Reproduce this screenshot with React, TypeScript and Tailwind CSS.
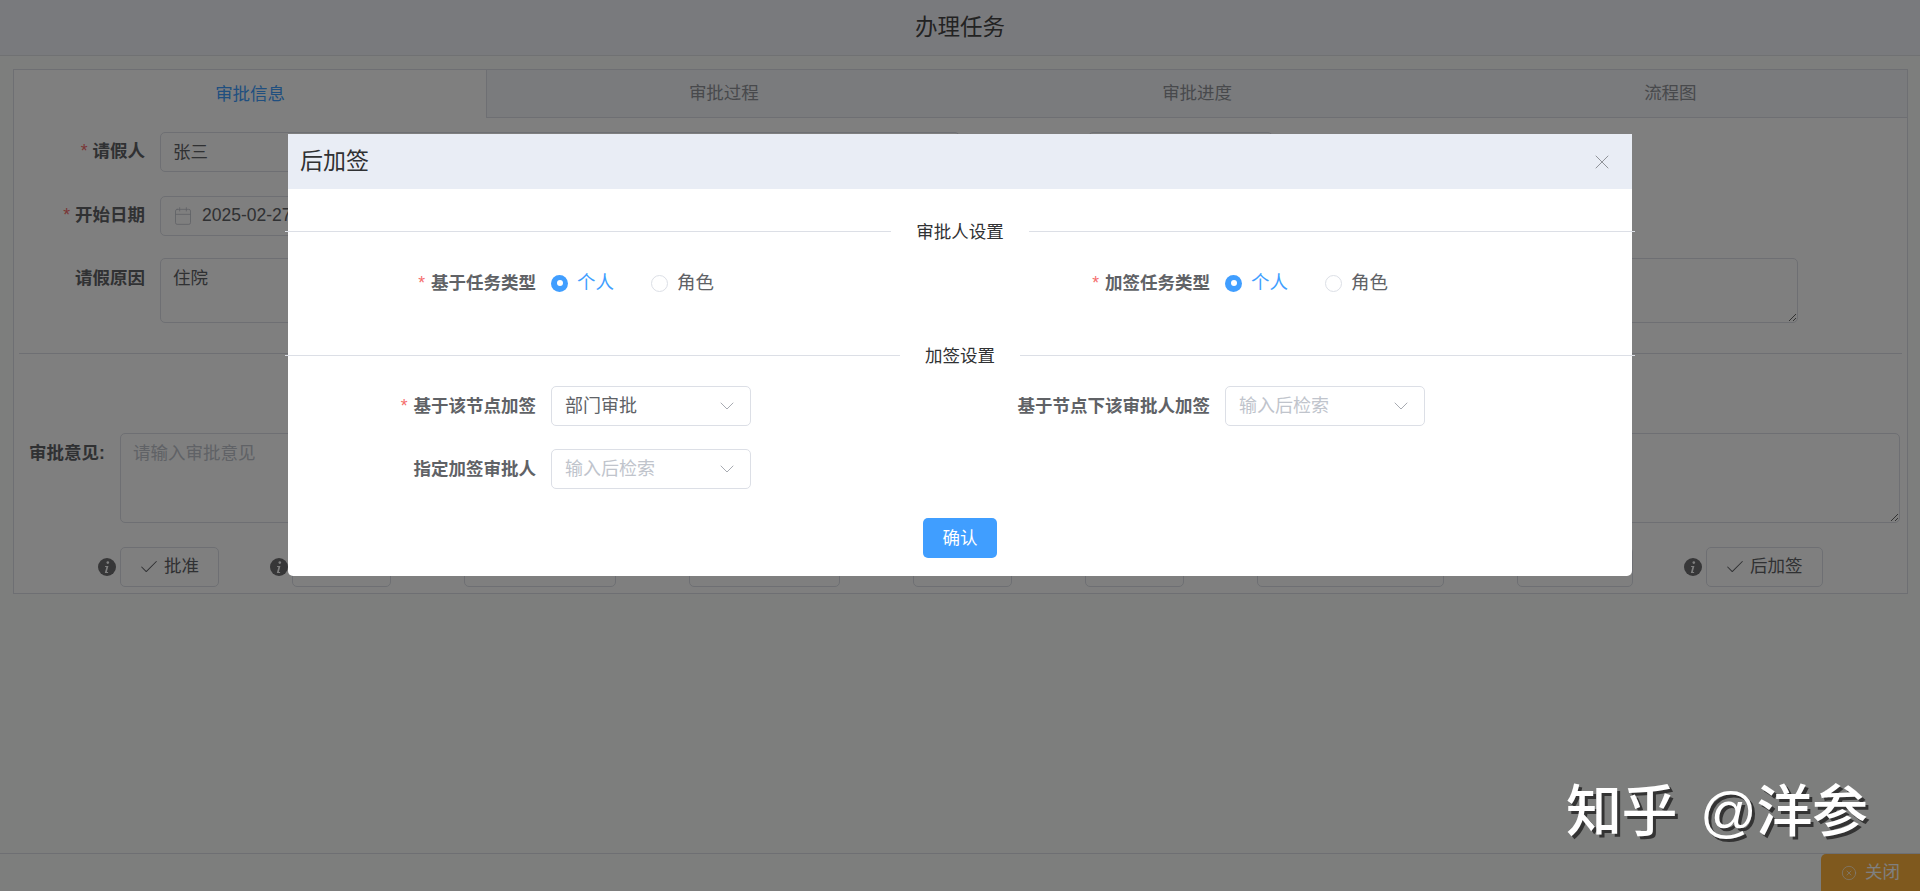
import { Calendar, Check, ChevronDown, CircleX, X } from "lucide-react";

const FONT = "font-['Liberation_Sans','Noto_Sans_CJK_SC',sans-serif]";

function Info() {
  return (
    <svg viewBox="0 0 18 18" className="w-[18px] h-[18px] shrink-0">
      <circle cx="9" cy="9" r="9" fill="#6e6e70" />
      <circle cx="9.8" cy="4.6" r="1.3" fill="#fff" />
      <path d="M7.2 8h3.2l-1.6 6h1.3v1H6.8l1.6-6H7z" fill="#fff" />
    </svg>
  );
}

function ActionButton({ text }: { text: string }) {
  return (
    <div className="flex items-center gap-[4px]">
      <Info />
      <button className="h-10 pl-[17px] pr-[19px] pb-[1px] flex items-center gap-[4px] bg-white border border-[#dcdfe6] rounded-[5px] text-[#606266] text-[17.5px] whitespace-nowrap">
        <Check size={22} strokeWidth={1.1} />
        {text}
      </button>
    </div>
  );
}

function BgLabel({ text, star }: { text: string; star?: boolean }) {
  return (
    <div className="w-[131px] shrink-0 mr-[15px] pb-[2px] flex justify-end items-center gap-[5px] h-10 text-[17.5px] font-bold text-[#606266]">
      {star && <span className="text-[#f56c6c] font-normal">*</span>}
      {text}
    </div>
  );
}

function Background() {
  const tabs = ["审批信息", "审批过程", "审批进度", "流程图"];
  const actions = ["批准", "拒绝", "退回到上级", "退回发起人", "转办", "委派", "驳回到指定节点", "前加签", "后加签"];
  return (
    <div className="h-full flex flex-col bg-[#fbfdfb]">
      <header className="h-[56px] shrink-0 flex items-center justify-center bg-[#f3f4fb] border-b border-[#e0e2e6] text-[22.5px] text-[#454545]">
        办理任务
      </header>
      <main className="flex-1 pl-[13px] pt-[13px]">
        <section className="w-[1895px] h-[525px] border border-[#dcdfe6] bg-[#fffefe]">
          <div className="grid grid-cols-4 h-[48px] text-[17.5px]">
            {tabs.map((t, i) => (
              <div
                key={t}
                className={
                  i === 0
                    ? "flex items-center justify-center text-[#409eff] border-r border-[#dcdfe6]"
                    : "flex items-center justify-center bg-[#f5f7fa] text-[#909399] border-b border-[#dcdfe6]"
                }
              >
                {t}
              </div>
            ))}
          </div>
          <div className="pt-[14px]">
            <div className="flex">
              <BgLabel text="请假人" star />
              <div className="w-[800px] h-10 border border-[#dcdfe6] rounded-[5px] pl-[12px] flex items-center text-[17.5px] text-[#606266]">张三</div>
              <div className="w-[185px] h-10 ml-[128px] border border-[#dcdfe6] rounded-[5px]" />
            </div>
            <div className="flex mt-[24px]">
              <BgLabel text="开始日期" star />
              <div className="w-[800px] h-10 border border-[#dcdfe6] rounded-[5px] pl-[12px] pb-[1px] flex items-center gap-[9px] text-[17.5px] text-[#606266]">
                <Calendar size={20} strokeWidth={1} className="text-[#c0c4cc]" />
                2025-02-27
              </div>
            </div>
            <div className="flex mt-[22px]">
              <div className="w-[131px] shrink-0 mr-[15px] flex justify-end pt-[7px] text-[17.5px] font-bold text-[#606266]">请假原因</div>
              <textarea
                readOnly
                defaultValue="住院"
                className="w-[1638px] h-[65px] border border-[#dcdfe6] rounded-[5px] px-[12px] py-[6px] text-[17.5px] text-[#606266] outline-none"
              />
            </div>
            <div className="h-px bg-[#dcdfe6] mt-[30px] mx-[5px]" />
            <div className="flex mt-[79px] pl-[15px]">
              <div className="w-[91px] shrink-0 pt-[7px] text-[17.5px] font-bold text-[#606266] whitespace-nowrap">审批意见:</div>
              <textarea
                readOnly
                placeholder="请输入审批意见"
                className="w-[1780px] h-[90px] border border-[#dcdfe6] rounded-[5px] px-[12px] py-[6px] text-[17.5px] text-[#606266] placeholder:text-[#c0c4cc] outline-none"
              />
            </div>
            <div className="flex gap-[51px] mt-[24px] pl-[84px]">
              {actions.map((a) => (
                <ActionButton key={a} text={a} />
              ))}
            </div>
          </div>
        </section>
      </main>
      <footer className="h-[38px] shrink-0 flex justify-end border-t border-[#dcdfe6]">
        <button className="w-[99px] h-full bg-[#ffb23c] rounded-tl-[5px] flex items-center justify-end pr-[20px] gap-[8px] text-[17.5px] text-[#ffffff]">
          <CircleX size={16} strokeWidth={1} />
          关闭
        </button>
      </footer>
    </div>
  );
}

function Field({ label, star, children }: { label: string; star?: boolean; children: React.ReactNode }) {
  return (
    <div className="flex items-center h-10">
      <div className="w-[248px] shrink-0 mr-[15px] flex justify-end items-center gap-[6px] text-[17.5px] font-bold text-[#606266] whitespace-nowrap">
        {star && <span className="text-[#f56c6c] font-normal">*</span>}
        {label}
      </div>
      {children}
    </div>
  );
}

function RadioPair() {
  return (
    <div className="flex items-center text-[18.5px]">
      <span className="w-[17px] h-[17px] rounded-full bg-[#409eff] flex items-center justify-center">
        <span className="w-[6px] h-[6px] rounded-full bg-white" />
      </span>
      <span className="ml-[9px] text-[#409eff]">个人</span>
      <span className="ml-[37px] w-[17px] h-[17px] rounded-full border border-[#dcdfe6] bg-white" />
      <span className="ml-[9px] text-[#606266]">角色</span>
    </div>
  );
}

function Select({ text, placeholder }: { text?: string; placeholder?: string }) {
  return (
    <div className="w-[200px] h-10 border border-[#dcdfe6] rounded-[5px] bg-white pl-[13px] pr-[11px] flex items-center justify-between text-[18px]">
      <span className={text ? "text-[#606266]" : "text-[#c0c4cc]"}>{text ?? placeholder}</span>
      <ChevronDown size={24} strokeWidth={1} className="text-[#a8abb2]" />
    </div>
  );
}

function Divider({ text, className }: { text: string; className: string }) {
  return (
    <div className={`flex items-center h-6 -mx-[3px] ${className}`}>
      <div className="flex-1 h-px bg-[#dcdfe6]" />
      <span className="px-[25px] pt-[2px] text-[17.5px] text-[#303133]">{text}</span>
      <div className="flex-1 h-px bg-[#dcdfe6]" />
    </div>
  );
}

function Modal() {
  return (
    <div className="absolute left-[288px] top-[134px] w-[1344px] h-[442px] bg-white rounded-b-[5px]">
      <div className="h-[55px] bg-[#e9edf5] flex items-center justify-between pl-[12px] pr-[18px]">
        <span className="text-[23px] text-[#303133] -mt-[1px]">后加签</span>
        <X size={24} strokeWidth={1} className="text-[#909399]" />
      </div>
      <Divider text="审批人设置" className="mt-[30px]" />
      <div className="grid grid-cols-[674px_1fr] mt-[20px]">
        <Field label="基于任务类型" star><RadioPair /></Field>
        <Field label="加签任务类型" star><RadioPair /></Field>
      </div>
      <Divider text="加签设置" className="mt-[40px]" />
      <div className="grid grid-cols-[674px_1fr] gap-y-[23px] mt-[19px]">
        <Field label="基于该节点加签" star><Select text="部门审批" /></Field>
        <Field label="基于节点下该审批人加签"><Select placeholder="输入后检索" /></Field>
        <Field label="指定加签审批人"><Select placeholder="输入后检索" /></Field>
      </div>
      <div className="flex justify-center mt-[29px]">
        <button className="w-[74px] h-10 bg-[#409eff] rounded-[5px] text-white text-[17.5px]">确认</button>
      </div>
    </div>
  );
}

export default function App() {
  return (
    <div className={`relative w-full h-[891px] overflow-hidden ${FONT}`}>
      <Background />
      <div className="absolute inset-0 bg-black/50" />
      <Modal />
      <div className="absolute left-[1566px] top-[772px] text-[56px] leading-[80px] tracking-[-0.5px] font-medium text-white whitespace-pre [word-spacing:8px] [text-shadow:3px_3px_0_#333333]">
        知乎 @洋参
      </div>
    </div>
  );
}
